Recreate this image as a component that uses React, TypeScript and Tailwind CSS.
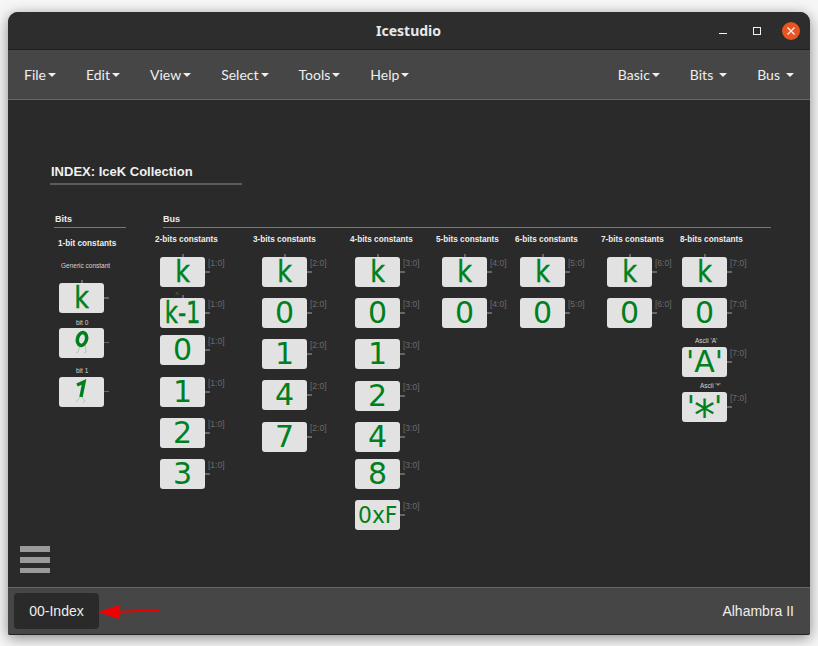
import React from "react";

type B = { x: number; y: number; t: string; r?: string };

const blocks: B[] = [
  { x: 51, y: 183, t: "k" },
  { x: 152, y: 157, t: "k", r: "[1:0]" },
  { x: 152, y: 198, t: "k-1", r: "[1:0]" },
  { x: 152, y: 235, t: "0", r: "[1:0]" },
  { x: 152, y: 277, t: "1", r: "[1:0]" },
  { x: 152, y: 318, t: "2", r: "[1:0]" },
  { x: 152, y: 359, t: "3", r: "[1:0]" },
  { x: 254, y: 157, t: "k", r: "[2:0]" },
  { x: 254, y: 198, t: "0", r: "[2:0]" },
  { x: 254, y: 239, t: "1", r: "[2:0]" },
  { x: 254, y: 280, t: "4", r: "[2:0]" },
  { x: 254, y: 322, t: "7", r: "[2:0]" },
  { x: 347, y: 157, t: "k", r: "[3:0]" },
  { x: 347, y: 198, t: "0", r: "[3:0]" },
  { x: 347, y: 239, t: "1", r: "[3:0]" },
  { x: 347, y: 281, t: "2", r: "[3:0]" },
  { x: 347, y: 322, t: "4", r: "[3:0]" },
  { x: 347, y: 359, t: "8", r: "[3:0]" },
  { x: 347, y: 400, t: "0xF", r: "[3:0]" },
  { x: 434, y: 157, t: "k", r: "[4:0]" },
  { x: 434, y: 198, t: "0", r: "[4:0]" },
  { x: 512, y: 157, t: "k", r: "[5:0]" },
  { x: 512, y: 198, t: "0", r: "[5:0]" },
  { x: 599, y: 157, t: "k", r: "[6:0]" },
  { x: 599, y: 198, t: "0", r: "[6:0]" },
  { x: 674, y: 157, t: "k", r: "[7:0]" },
  { x: 674, y: 198, t: "0", r: "[7:0]" },
  { x: 674, y: 247, t: "'A'", r: "[7:0]" },
  { x: 674, y: 292, t: "'*'", r: "[7:0]" },
];

const headers: [number, number, string][] = [
  [50, 138, "1-bit constants"],
  [147, 134, "2-bits constants"],
  [245, 134, "3-bits constants"],
  [342, 134, "4-bits constants"],
  [428, 134, "5-bits constants"],
  [507, 134, "6-bits constants"],
  [593, 134, "7-bits constants"],
  [672, 134, "8-bits constants"],
];

const tiny: [number, number, string][] = [
  [53, 162, "Generic constant"],
  [68, 219, "bit 0"],
  [68, 267, "bit 1"],
  [687, 237, "Ascii 'A'"],
  [692, 282, "Ascii '*'"],
];

function Glyph({ t }: { t: string }) {
  if (t === "k")
    return <span className="inline-block text-[30px] scale-x-[0.85] [-webkit-text-stroke:0.4px_#00801c]">k</span>;
  if (t === "k-1")
    return <span className="inline-block text-[30px] scale-x-[0.76] [-webkit-text-stroke:0.4px_#00801c]">k-1</span>;
  if (t === "0xF") return <span className="inline-block text-[23px] scale-x-[0.95]">0xF</span>;
  if (t === "'A'") return <span className="inline-block text-[30px]">'A'</span>;
  if (t === "'*'")
    return (
      <span className="flex items-start text-[30px] h-[30px]">
        <span>'</span>
        <span className="text-[42px] leading-[10px] mx-[-1px] mt-[19px]">*</span>
        <span>'</span>
      </span>
    );
  return <span className="inline-block text-[30px]">{t}</span>;
}

function Block({ b }: { b: B }) {
  return (
    <div className="absolute" style={{ left: b.x, top: b.y }}>
      {(b.t === "k" || b.t === "k-1") && <div className="absolute left-[22px] top-[-3px] w-[2px] h-[3px] bg-[#666]" />}
      <div className="absolute left-[45px] top-[14px] w-[5px] h-[2px] bg-[#666]" />
      {b.r && (
        <div className="absolute left-[48px] top-[1px] text-[8.5px] leading-[10px] text-[#6a6a6a] whitespace-nowrap font-['Liberation_Sans',sans-serif]">
          {b.r}
        </div>
      )}
      <div className="w-[45px] h-[30px] rounded-[3px] bg-[#e2e2e2] text-[#00801c] flex items-center justify-center leading-none whitespace-nowrap font-['DejaVu_Sans',sans-serif]">
        <Glyph t={b.t} />
      </div>
    </div>
  );
}

function Hand({ x, y, t }: { x: number; y: number; t: string }) {
  return (
    <div className="absolute" style={{ left: x, top: y }}>
      <div className="absolute left-[45px] top-[14px] w-[5px] h-[1px] bg-[#666]" />
      <div className="relative w-[45px] h-[30px] rounded-[3px] bg-[#e2e2e2] overflow-hidden">
        <svg width="45" height="30" viewBox="0 0 45 30" fill="none">
          {t === "0" ? (
            <>
              <path d="M22 15 L19 24 L17 25 M26 15 L27 24 L25 25" stroke="#a9cfb0" strokeWidth="1" />
              <ellipse cx="23" cy="11" rx="4.5" ry="6.5" transform="rotate(15 23 11)" stroke="#00801c" strokeWidth="3.5" />
            </>
          ) : (
            <>
              <path d="M21 20 L18 24 L17 25 M23 20 L26 24 L24 26" stroke="#a9cfb0" strokeWidth="1" />
              <path d="M18 8 L25 5 L22 20" stroke="#00801c" strokeWidth="3.5" />
            </>
          )}
        </svg>
      </div>
    </div>
  );
}

function Menu({ label, left, gap = 2 }: { label: string; left: number; gap?: number }) {
  return (
    <div className="flex items-center" style={{ marginLeft: left }}>
      <span>{label}</span>
      <span
        className="w-0 h-0 border-x-[4px] border-x-transparent border-t-[4px] border-t-[#eeeeee]"
        style={{ marginLeft: gap }}
      />
    </div>
  );
}

export default function App() {
  return (
    <div className="w-[818px] h-[646px] bg-[#f6f6f6] pt-3 pl-2 overflow-hidden">
      <div className="w-[802px] h-[623px] flex flex-col rounded-t-[10px] rounded-b-[2px] overflow-hidden shadow-[0_3px_14px_rgba(0,0,0,0.45)] bg-[#2b2b2b] border-b border-[#222]">
        <div className="h-[38px] shrink-0 bg-[#2d2d2d] flex items-center pl-[368px] pr-[10px] border-b border-[#1f1f1f]">
          <span className="text-[14px] font-bold text-[#e8e8e8] font-['Noto_Sans',sans-serif]">Icestudio</span>
          <div className="ml-auto flex items-center">
            <svg width="10" height="10" viewBox="0 0 10 10" className="mr-[24px] mt-[1px]">
              <rect x="1" y="7" width="8" height="1" fill="#f2f2f2" />
            </svg>
            <svg width="10" height="10" viewBox="0 0 10 10" className="mr-[20px]">
              <rect x="1.5" y="1.5" width="7" height="7" fill="none" stroke="#f2f2f2" />
            </svg>
            <div className="w-[18px] h-[18px] rounded-full bg-[#e95420] flex items-center justify-center">
              <svg width="10" height="10" viewBox="0 0 10 10">
                <path d="M1.5 1.5 L8.5 8.5 M8.5 1.5 L1.5 8.5" stroke="#fff" strokeWidth="1.2" />
              </svg>
            </div>
          </div>
        </div>

        <div className="h-[50px] shrink-0 bg-[#464646] border-b border-[#666] flex items-center text-[14px] text-[#eeeeee] font-['Lato',sans-serif]">
          <Menu label="File" left={16} />
          <Menu label="Edit" left={30} />
          <Menu label="View" left={30} />
          <Menu label="Select" left={30} />
          <Menu label="Tools" left={30} />
          <Menu label="Help" left={30} />
          <div className="ml-auto flex items-center pr-[16px]">
            <Menu label="Basic" left={0} />
            <Menu label="Bits" left={30} gap={6} />
            <Menu label="Bus" left={30} gap={6} />
          </div>
        </div>

        <div className="relative flex-1 bg-[#2a2a2a] font-['Liberation_Sans',sans-serif]">
          <div className="absolute left-[43px] top-[64px] text-[13px] font-bold leading-[16px] text-[#f0f0f0] whitespace-nowrap">
            INDEX: IceK Collection
          </div>
          <div className="absolute left-[42px] top-[83px] w-[192px] h-[2px] bg-[#5c5c5c]" />
          <div className="absolute left-[47px] top-[113px] text-[9px] font-bold leading-[12px] text-[#eeeeee]">Bits</div>
          <div className="absolute left-[46px] top-[127px] w-[72px] h-px bg-[#777]" />
          <div className="absolute left-[155px] top-[113px] text-[9px] font-bold leading-[12px] text-[#eeeeee]">Bus</div>
          <div className="absolute left-[155px] top-[127px] w-[608px] h-px bg-[#777]" />
          {headers.map(([x, y, t]) => (
            <div key={x} className="absolute text-[8.2px] font-bold leading-[12px] text-[#eeeeee] whitespace-nowrap" style={{ left: x, top: y }}>
              {t}
            </div>
          ))}
          {tiny.map(([x, y, t]) => (
            <div key={t} className="absolute text-[6.5px] leading-[8px] text-[#d5d5d5] whitespace-nowrap" style={{ left: x, top: y }}>
              {t}
            </div>
          ))}
          <div className="absolute left-[167px] top-[192px] w-[8px] text-[5px] leading-[3px] text-[#888]">≍</div>
          {blocks.map((b) => (
            <Block key={`${b.x}-${b.y}`} b={b} />
          ))}
          <Hand x={51} y={228} t="0" />
          <Hand x={51} y={277} t="1" />
          <div className="absolute left-[12px] top-[446px] w-[30px] flex flex-col gap-[5px]">
            <div className="h-[6px] bg-[#9a9a9a]" />
            <div className="h-[6px] bg-[#9a9a9a]" />
            <div className="h-[5px] bg-[#9a9a9a]" />
          </div>
        </div>

        <div className="relative h-[47px] shrink-0 bg-[#464646] border-t border-[#666] flex items-center justify-between pl-[6px] pr-[16px] font-['Liberation_Sans',sans-serif]">
          <div className="w-[85px] h-[36px] rounded-[4px] bg-[#2a2a2a] flex items-center justify-center text-[14px] text-[#eeeeee]">
            00-Index
          </div>
          <span className="text-[14px] text-[#eeeeee]">Alhambra II</span>
          <svg width="64" height="16" viewBox="0 0 64 16" className="absolute left-[90px] top-[16px]">
            <path d="M0 8 L21 1 L21 15 Z" fill="#f00000" />
            <path d="M18 8 L62 6" stroke="#f00000" strokeWidth="2" />
          </svg>
        </div>
      </div>
    </div>
  );
}
